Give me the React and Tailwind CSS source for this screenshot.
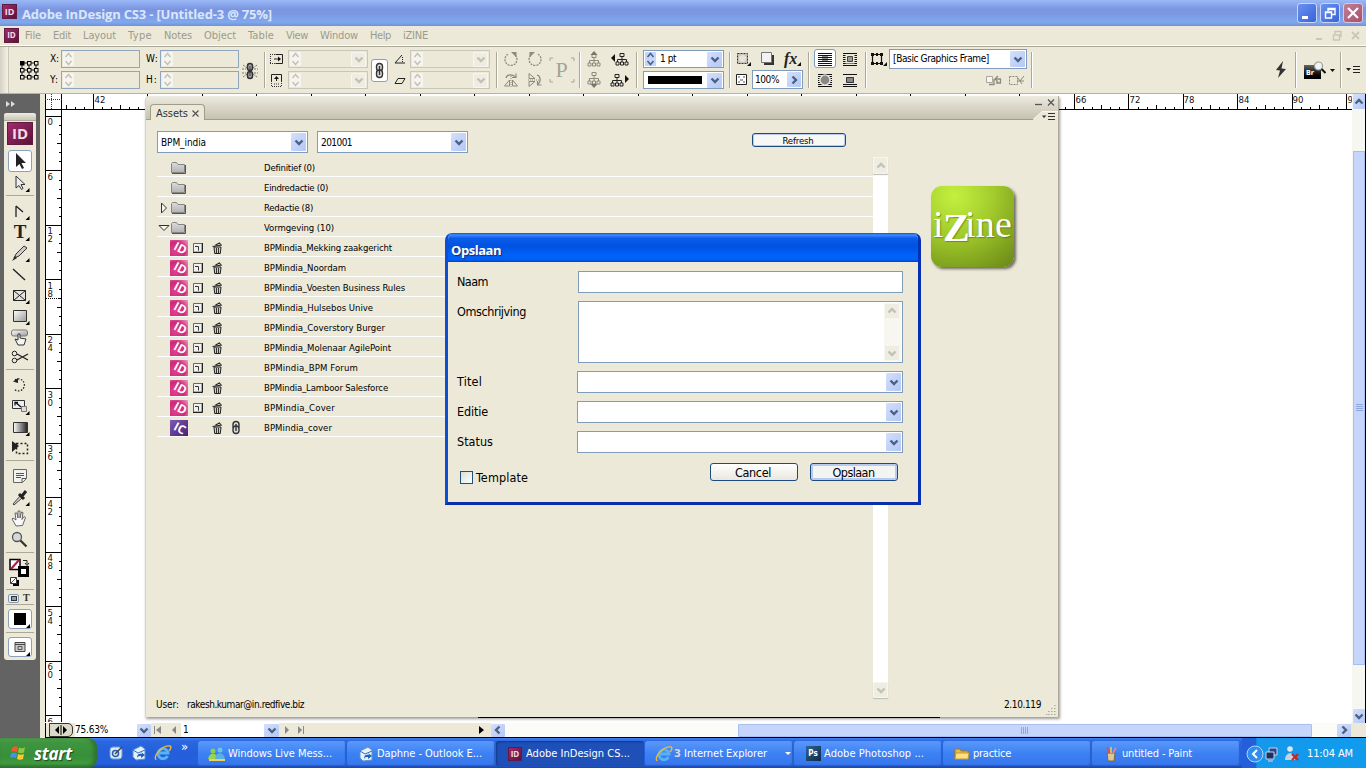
import React, { useLayoutEffect, useRef } from "react";

/* Single-line text whose tracking is adjusted to fill a given width. */
function Fit({ w, className = "", children }) {
  const ref = useRef(null);
  useLayoutEffect(() => {
    const el = ref.current;
    el.style.letterSpacing = "0px";
    const natural = el.getBoundingClientRect().width;
    el.style.letterSpacing = (w - natural) / el.textContent.length + "px";
  }, [w]);
  return (
    <span ref={ref} className={"inline-block whitespace-pre shrink-0 " + className}>
      {children}
    </span>
  );
}

function Ico({ w = 16, h = 16, className = "", children }) {
  return (
    <svg width={w} height={h} viewBox={`0 0 ${w} ${h}`} className={"block shrink-0 " + className} fill="none">
      {children}
    </svg>
  );
}

const Chevron = ({ color = "#4d6185", d = "M3.5 5.5 7 9l3.5-3.5" }) => (
  <Ico w={14} h={14}>
    <path d={d} stroke={color} strokeWidth="2.4" />
  </Ico>
);
const UP = "M3.5 8.5 7 5l3.5 3.5";
const LEFT = "M8.5 3.5 5 7l3.5 3.5";
const RIGHT = "M5.5 3.5 9 7l-3.5 3.5";

function DropBtn({ off = false, d, className = "" }) {
  return (
    <span
      className={
        "flex items-center justify-center shrink-0 overflow-hidden rounded-[1px] " +
        (off ? "border border-[#f7f6f0] bg-[#efede2] " : "bg-gradient-to-br from-[#d3dffd] to-[#b3c8f5] ") +
        className
      }
    >
      <Chevron color={off ? "#c3c1b4" : "#4d6185"} d={d} />
    </span>
  );
}

function Spin({ off = true }) {
  return (
    <span className={"flex h-[14px] w-[11px] shrink-0 items-center justify-center " + (off ? "bg-[#f5f4ee]" : "bg-[#c6d5fa]")}>
      <Ico w={9} h={14}>
        <path d="M1.500 5 4.500 1.500l3 3.500M1.500 9l3 3.500 3-3.500" stroke={off ? "#c6c4b8" : "#4d6185"} strokeWidth="1.600" />
      </Ico>
    </span>
  );
}

const Field = () => (
  <div className="flex h-[18px] w-[79px] items-center border border-[#8fa6bd] px-px">
    <Spin />
  </div>
);
const FieldDrop = () => (
  <div className="flex h-[18px] w-[80px] items-center justify-between border border-[#c9c7ba] px-px">
    <Spin />
    <DropBtn off className="h-[15px] w-[15px]" />
  </div>
);

const Sep = ({ className = "w-[8px]" }) => (
  <div className={"flex h-full shrink-0 justify-center " + className}>
    <div className="mt-[5px] h-[36px] w-[2px] border-l border-[#aca899] bg-white" />
  </div>
);

const Pair = ({ className = "", children }) => (
  <div className={"flex shrink-0 flex-col gap-[3px] pt-[3px] " + className}>{children}</div>
);
const Row = ({ className = "", children }) => <div className={"flex h-[18px] items-center " + className}>{children}</div>;

const ID = ({ className = "h-[16px] w-[16px] text-[9px]" }) => (
  <span
    className={
      "flex shrink-0 items-center justify-center border border-[#5f1c40] bg-gradient-to-br from-[#a52a6f] to-[#5c1238] font-['Open_Sans',sans-serif] font-bold leading-none text-[#f6dbe8] [font-stretch:normal] " +
      className
    }
  >
    ID
  </span>
);

const Chain = ({ c = "#333", w = 15, h = 17 }) => (
  <Ico w={w} h={h}>
    <rect x={w / 2 - 3} y="1.5" width="6" height="7.5" rx="3" stroke={c} strokeWidth="1.4" fill="#ddd" />
    <rect x={w / 2 - 3} y={h - 9} width="6" height="7.5" rx="3" stroke={c} strokeWidth="1.4" fill="#ddd" />
    <path d={`M${w / 2} 4v${h - 8}`} stroke={c} strokeWidth="1.4" />
  </Ico>
);

const Tree = ({ c = "#222" }) => (
  <>
    <path d="M5 1.500h4v3H5zM7 4.500v3M2.500 10V7.500h9V10M7 7.500V10" stroke={c} />
    <path d="M1 10h3v3H1zM5.500 10h3v3h-3zM10 10h3v3h-3z" stroke={c} />
  </>
);

function RotIcon({ flip }) {
  return (
    <Ico>
      <g transform={flip ? "translate(16 0) scale(-1 1)" : undefined}>
        <path d="M5 3.200A6 6 0 1 0 12 4" stroke="#8c8a7d" strokeWidth="1.300" strokeDasharray="2 1" />
        <path d="M8 1h5.500v5.500z" fill="#8c8a7d" />
      </g>
    </Ico>
  );
}

const FlipIcon = ({ v }) => (
  <Ico>
    <g transform={v ? "rotate(90 8 8)" : undefined}>
      <path d="M1.500 14 6.500 14V8zM14.500 14H9.500V8z" stroke="#8c8a7d" />
      <path d="M8 4v12" stroke="#8c8a7d" strokeDasharray="1 1" />
      <path d="M3 6c1-4 7-4 9-1M13 1.500v4H9" stroke="#8c8a7d" strokeWidth="1.200" />
    </g>
  </Ico>
);

const Wrap = ({ kind }) => (
  <Ico w={16} h={16}>
    <path d="M1 2.500h14M1 4.500h14M1 6.500h14M1 8.500h14M1 10.500h14M1 12.500h14M1 14.500h14" stroke="#111" />
    {kind === 0 && <path d="M5 5h6v6H5z" fill="#222" opacity=".5" />}
    {kind === 1 && <path d="M3.500 3.500h9v9h-9z" fill="#ece9d8" />}
    {kind === 1 && <path d="M5.500 5.500h5v5h-5z" fill="#999" stroke="#444" />}
    {kind === 2 && <circle cx="8" cy="8" r="5.800" fill="#ece9d8" />}
    {kind === 2 && <circle cx="8" cy="8" r="4.400" fill="#888" />}
    {kind === 3 && <path d="M0 4h16v8H0z" fill="#ece9d8" />}
    {kind === 3 && <path d="M4.500 5.500h7v5h-7z" fill="#888" stroke="#333" />}
  </Ico>
);

function ControlBar() {
  return (
    <div className="flex h-[48px] shrink-0 border-b border-t border-b-[#b6b3a3] border-t-[#aca899] bg-[#ece9d8]">
      <div className="h-full w-[9px] shrink-0 border-r border-[#c9c6b5] bg-gradient-to-r from-[#d5d2c3] to-[#f4f2e8]" />
      <div className="w-[41px] shrink-0 pl-[10px] pt-[13px]">
        <Ico w={20} h={20}>
          <path d="M3 3h14v14H3zM3 10h14M10 3v14" stroke="#111" />
          {[1, 8, 15].map((y) =>
            [1, 8, 15].map((x) => (
              <rect key={x + "-" + y} x={x + 0.5} y={y + 0.5} width="3.5" height="3.5" fill={x + y === 2 ? "#000" : "#ece9d8"} stroke="#000" />
            ))
          )}
        </Ico>
      </div>
      <Pair className="w-[11px] text-[10px]">
        <Row><Fit w={9}>X:</Fit></Row>
        <Row><Fit w={9}>Y:</Fit></Row>
      </Pair>
      <Pair className="w-[85px]"><Field /><Field /></Pair>
      <Pair className="w-[14px] text-[10px]">
        <Row><Fit w={12}>W:</Fit></Row>
        <Row><Fit w={12}>H:</Fit></Row>
      </Pair>
      <Pair className="w-[82px]"><Field /><Field /></Pair>
      <div className="w-[19px] shrink-0 pt-[15px]">
        <Ico w={16} h={18}>
          <path d="M1 3l4 3M1 15l4-3M15 3l-4 3M15 15l-4-3M0 7h4M0 11h4M12 7h4M12 11h4" stroke="#777" strokeDasharray="2 1" />
          <rect x="5.500" y="1.500" width="5" height="7" rx="2.500" stroke="#333" strokeWidth="1.500" fill="#aaa" />
          <rect x="5.500" y="9.500" width="5" height="7" rx="2.500" stroke="#333" strokeWidth="1.500" fill="#aaa" />
          <path d="M8 4v10" stroke="#333" />
        </Ico>
      </div>
      <Sep />
      <Pair className="w-[19px]">
        <Row>
          <Ico>
            <path d="M1 3.500h6M1 12.500h6M1.500 3v9" stroke="#333" strokeDasharray="1 1" />
            <path d="M6.500 3.500h7v9h-7M5 8h5" stroke="#222" />
            <path d="M9 5.500 12 8l-3 2.500z" fill="#111" />
          </Ico>
        </Row>
        <Row>
          <Ico>
            <path d="M2.500 9v5M12.500 9v5M3 14.500h10M5 12h6" stroke="#333" strokeDasharray="1 1" />
            <path d="M2.500 9V2.500h10V9M7.500 9V6" stroke="#222" />
            <path d="M5 7l2.500-3L10 7z" fill="#111" />
          </Ico>
        </Row>
      </Pair>
      <Pair className="w-[83px]"><FieldDrop /><FieldDrop /></Pair>
      <div className="w-[22px] shrink-0 pt-[12px]">
        <div className="flex h-[23px] w-[17px] items-center justify-center rounded-[3px] border border-[#8ba0bd] bg-white"><Chain /></div>
      </div>
      <Pair className="w-[17px]">
        <Row><Ico w={14} h={14}><path d="M9 3 2 11h10" stroke="#222" /><path d="M9.500 5v5" stroke="#222" strokeDasharray="1 1" /></Ico></Row>
        <Row><Ico w={14} h={14}><path d="M5 5.500h7l-3 5H2z" stroke="#222" /></Ico></Row>
      </Pair>
      <Pair className="w-[81px]"><FieldDrop /><FieldDrop /></Pair>
      <Sep className="w-[11px]" />
      <Pair className="w-[25px] pl-px"><Row><RotIcon /></Row><Row><FlipIcon /></Row></Pair>
      <Pair className="w-[21px]"><Row><RotIcon flip /></Row><Row><FlipIcon v /></Row></Pair>
      <div className="flex h-full w-[27px] shrink-0 items-center justify-center">
        <div className="relative flex h-[26px] w-[26px] items-center justify-center">
          <span className="font-['Liberation_Serif',serif] text-[22px] leading-none text-[#a5a396]">P</span>
          <Ico w={26} h={26} className="absolute left-0 top-0"><path d="M1 4V1h3M22 1h3v3M25 22v3h-3M4 25H1v-3" stroke="#a5a396" /></Ico>
        </div>
      </div>
      <Sep className="w-[10px]" />
      <Pair className="w-[25px] pl-[2px]">
        <Row><Ico w={14} h={18}><g transform="translate(0 3)"><Tree c="#8c8a7d" /></g><path d="M3.500 5 7 1l3.500 4z" fill="#77756a" /></Ico></Row>
        <Row><Ico w={14} h={18}><Tree c="#8c8a7d" /><path d="M3.500 13 7 17l3.500-4z" fill="#77756a" /></Ico></Row>
      </Pair>
      <Pair className="w-[22px]">
        <Row><Ico w={20} h={16}><path d="M5 3v8L1 7z" fill="#111" /><g transform="translate(5 1)"><Tree /></g></Ico></Row>
        <Row><Ico w={20} h={16}><path d="M15 3v8l4-4z" fill="#111" /><g transform="translate(0 1)"><Tree /></g></Ico></Row>
      </Pair>
      <Sep className="w-[10px]" />
      <Pair className="w-[82px] pl-px">
        <div className="flex h-[18px] w-[81px] items-center border border-[#7f9db9] bg-white px-px text-[10px]">
          <Spin off={false} />
          <Fit w={16} className="ml-[4px]">1 pt</Fit>
          <DropBtn className="ml-auto h-[15px] w-[15px]" />
        </div>
        <div className="flex h-[18px] w-[81px] items-center border border-[#7f9db9] bg-white px-px">
          <span className="ml-[3px] h-[8px] w-[54px] bg-black" />
          <DropBtn className="ml-auto h-[15px] w-[15px]" />
        </div>
      </Pair>
      <Sep className="w-[11px]" />
      <div className="flex w-[68px] shrink-0 flex-col gap-[2px] pt-[3px]">
        <div className="flex h-[18px] items-center">
          <Ico w={18} h={16} className="ml-[2px]">
            <path d="M.5 2.500h10v10H.5z" fill="#c9c7bd" stroke="#333" strokeDasharray="2 1" /><circle cx="5.500" cy="7.500" r="3.500" fill="#e5e3da" /><path d="M14 11v4h-4z" fill="#111" />
          </Ico>
          <Ico w={16} h={16} className="ml-[5px]"><path d="M4 4h10v10H4z" fill="#333" /><path d="M1.500 1.500h10v10h-10z" fill="#f2f2f2" stroke="#777" /></Ico>
          <span className="ml-[8px] font-['Liberation_Serif',serif] text-[16px] font-bold italic leading-none text-[#222]">fx</span>
          <Ico w={5} h={16}><path d="M4 11v4H0z" fill="#111" /></Ico>
        </div>
        <div className="flex h-[19px] items-center">
          <Ico w={12} h={14} className="ml-px"><path d="M.5 1.500h10v10H.5z" fill="#fff" stroke="#222" /><path d="M2 3h2v2H2zM7 3h2v2H7zM4 6h3v2H4zM2 8h2v2H2zM7 8h2v2H7z" fill="#aaa" /></Ico>
          <div className="ml-[4px] flex h-[19px] w-[51px] items-center justify-between border border-[#7f9db9] bg-white pl-[2px] pr-px text-[10px]">
            <Fit w={24}>100%</Fit>
            <DropBtn d={RIGHT} className="h-[15px] w-[14px]" />
          </div>
        </div>
      </div>
      <Sep className="w-[11px]" />
      <Pair className="w-[29px]">
        <div className="-mt-px flex h-[19px] w-[22px] items-center justify-center rounded-[3px] border border-[#7f9db9] bg-white"><Wrap kind={0} /></div>
        <Row className="pl-[3px]"><Wrap kind={2} /></Row>
      </Pair>
      <Pair className="w-[18px]"><Row className="-ml-px"><Wrap kind={1} /></Row><Row className="-ml-px"><Wrap kind={3} /></Row></Pair>
      <Sep className="w-[9px]" />
      <div className="w-[19px] shrink-0 pt-[3px]">
        <Ico w={17} h={18}><path d="M2.500 4.500h9v9h-9z" stroke="#111" strokeWidth="1.200" /><path d="M1 3h3v3H1zM10 3h3v3h-3zM1 12h3v3H1zM10 12h3v3h-3zM6 3h2v3H6zM6 12h2v3H6z" fill="#111" /><path d="M17 12v4h-4z" fill="#111" /></Ico>
      </div>
      <div className="w-[138px] shrink-0 pt-[2px]">
        <div className="flex h-[20px] items-center justify-between border border-[#7f9db9] bg-white pl-[3px] pr-px text-[10px]">
          <Fit w={96}>[Basic Graphics Frame]</Fit>
          <DropBtn className="h-[16px] w-[15px]" />
        </div>
        <div className="mt-[5px] flex justify-end gap-[6px] pr-[2px]">
          <Ico w={17} h={14}><path d="M1.500 2.500h6v6h-6z" fill="#f5f4ee" stroke="#aaa89c" /><path d="M4 10.500h5V5M11 5h4.500v4H11M13 2l-3 3 3 3" stroke="#8c8a7d" strokeWidth="1.300" /></Ico>
          <Ico w={17} h={14}><path d="M1.500 2.500h8v8h-8z" stroke="#8c8a7d" strokeDasharray="2 1" /><path d="m16 2-4 5M10 4l4 6M9 7h7" stroke="#8c8a7d" /></Ico>
        </div>
      </div>
      <Sep className="w-[9px]" />
      <div className="grow" />
      <div className="w-[18px] shrink-0 pt-[14px]"><Ico w={12} h={18}><path d="M8 0 1 9l4 .5L3 17l8-9-4.500-.5z" fill="#333" /></Ico></div>
      <Sep className="w-[6px]" />
      <div className="w-[39px] shrink-0 pl-[5px] pt-[14px]">
        <div className="flex items-center">
          <div className="relative h-[19px] w-[24px]">
            <span className="mt-[4px] flex h-[14px] w-[17px] items-center bg-gradient-to-b from-[#666] to-black pl-[2px] pt-[3px] text-[7px] font-bold leading-none text-white">Br</span>
            <Ico w={24} h={19} className="absolute left-0 top-0"><circle cx="14.500" cy="5" r="4" fill="#f3f3f3" stroke="#999" strokeWidth="1.200" /><path d="m17.500 8 4 4" stroke="#111" strokeWidth="2" /></Ico>
          </div>
          <Ico w={6} h={6} className="ml-[2px]"><path d="M0 1h5L2.500 4z" fill="#111" /></Ico>
        </div>
      </div>
      <Sep className="w-[6px]" />
      <div className="w-[22px] shrink-0 pl-[2px] pt-[16px]"><Ico w={16} h={12}><path d="M0 5h5L2.500 8z" fill="#222" /><path d="M7 3.500h7M7 6.500h7M7 9.500h7" stroke="#222" /></Ico></div>
    </div>
  );
}

const toolIcons = [
  { y: "h-[22px]", sel: true, el: <path d="M7 2v14l3.500-3 2.500 5 2-1-2.500-5H17z" fill="#222" /> },
  { y: "h-[21px]", more: true, el: <path d="M7 3v12l3-2.500 2.500 4 1.500-1-2-4h4z" fill="#eee" stroke="#333" /> },
  "line",
  { y: "h-[21px]", more: true, el: <path d="M7 5v11M7 5l7 6" stroke="#222" strokeWidth="1.300" /> },
  { y: "h-[21px]", more: true, letter: "T" },
  { y: "h-[21px]", more: true, el: <><path d="m5 15 2-4 8-8 3 2-8 8z" fill="#ccc" stroke="#333" /><path d="m3 18 3-5 2 2z" fill="#222" /></> },
  { y: "h-[21px]", el: <path d="m4 5 12 11" stroke="#222" strokeWidth="1.400" /> },
  { y: "h-[21px]", more: true, el: <path d="M4.500 5.500h12v10h-12zM4.500 5.500l12 10M16.500 5.500l-12 10" stroke="#222" fill="#e4e3dc" /> },
  { y: "h-[21px]", more: true, el: <path d="M4.500 4.500h13v11h-13z" stroke="#333" fill="url(#silver)" /> },
  { y: "h-[21px]", el: <><rect x="2.500" y="3" width="16" height="6" rx="2" fill="url(#silver)" stroke="#777" /><path d="M9 7v6l-3-1 3 6h6l2-6-6-1V7z" fill="#f4f4f4" stroke="#333" /></> },
  { y: "h-[20px]", el: <><path d="m8 7 11 6M8 13l11-6" stroke="#222" strokeWidth="1.300" /><circle cx="5.500" cy="6.500" r="2.300" stroke="#222" /><circle cx="5.500" cy="13.500" r="2.300" stroke="#222" /></> },
  "line",
  { y: "h-[21px]", el: <><path d="M6 5a6 6 0 1 1-1 9" stroke="#222" strokeWidth="1.300" strokeDasharray="1.500 1.500" /><path d="M4 6.500 9 3v5z" fill="#222" /></> },
  { y: "h-[21px]", more: true, el: <><path d="M3.500 4.500h12v8h-12z" fill="#eee" stroke="#333" /><path d="M12.500 10.500h5v5h-5z" stroke="#777" fill="#ddd" /><path d="m6 6 6 5M6 9.500V6.500h3" stroke="#111" strokeWidth="1.300" /></> },
  { y: "h-[22px]", more: true, el: <path d="M4.500 5.500h14v10h-14z" stroke="#333" fill="url(#fade)" /> },
  { y: "h-[20px]", el: <><path d="M7.500 5.500h11v10h-11z" stroke="#222" strokeWidth="1.500" strokeDasharray="2 2" /><path d="M3 3v11l7-6z" fill="#222" /></> },
  "line",
  { y: "h-[21px]", el: <><path d="M4.500 3.500h13v9l-4 4h-9z" fill="#f2f2ee" stroke="#666" /><path d="M7 7.500h8M7 9.500h8M7 11.500h5M17 12.500h-4v4" stroke="#555" /></> },
  { y: "h-[21px]", more: true, el: <><path d="m4 17 7-8 2 2-8 7z" fill="#ccc" stroke="#444" /><path d="m10 7 5 5M13 9l4-5" stroke="#222" strokeWidth="3" /></> },
  { y: "h-[21px]", el: <path d="M7 18 3 11l1-1 3 2-1-7 2 0 1 5V3h2v7l1.500-6 1.500.5-1 7 2-3 1.500 1-3 8z" fill="#f8f8f8" stroke="#666" /> },
  { y: "h-[22px]", el: <><circle cx="8" cy="8" r="4.500" fill="#d4d8da" stroke="#555" strokeWidth="1.300" /><path d="m11.500 11.500 6 6" stroke="#333" strokeWidth="2.200" /></> },
];

function Tools() {
  return (
    <div className="flex w-[40px] shrink-0 flex-col bg-[#636363] pl-[4px] pt-[4px]">
      <Ico w={12} h={10} className="ml-[2px] mt-[1px]"><path d="M0 2v6l4-3zM5 2v6l4-3z" fill="#ddd" /></Ico>
      <div className="mt-[4px] flex h-[547px] w-[32px] flex-col items-center rounded-[3px] bg-[#ece9d8]">
        <div className="h-[8px] w-full shrink-0 rounded-t-[3px] border-b border-[#b0ad9e] bg-gradient-to-b from-[#efede2] to-[#c9c6b5]" />
        <ID className="mb-[5px] mt-px h-[23px] w-[26px] text-[15px]" />
        {toolIcons.map((t, i) =>
          typeof t === "string" ? (
            <div key={i} className="mb-[4px] mt-[1px] h-[2px] w-[28px] shrink-0 border-b border-[#aca899]" />
          ) : (
            <div key={i} className={"flex w-[24px] shrink-0 items-center justify-center " + t.y + (t.sel ? " rounded-[3px] border border-[#8ba0bd] bg-white" : "")}>
              <div className="relative flex h-[20px] w-[20px] items-center justify-center">
                {t.letter && <span className="font-['Liberation_Serif',serif] text-[19px] font-bold leading-none text-[#222]">T</span>}
                <Ico w={22} h={20} className="absolute -left-px top-0">
                  <defs>
                    <linearGradient id="silver" x1="0" y1="0" x2="1" y2="1"><stop stopColor="#fff" /><stop offset="1" stopColor="#999" /></linearGradient>
                    <linearGradient id="fade"><stop stopColor="#fff" /><stop offset="1" stopColor="#222" /></linearGradient>
                  </defs>
                  {t.el}
                  {t.more && <path d="M20.500 15v4h-4z" fill="#000" />}
                </Ico>
              </div>
            </div>
          )
        )}
        <div className="mt-[2px] h-px w-[28px] shrink-0 bg-[#aca899]" />
        <Ico w={24} h={32} className="mt-[4px]">
          <path d="M2 2.500h10v10H2z" fill="#fff" stroke="#000" strokeWidth="1.500" /><path d="m3 12 8-9" stroke="#b0184a" strokeWidth="2" />
          <path d="M11.500 10.500h8v8h-8z" fill="#fff" stroke="#000" strokeWidth="3" />
          <path d="M15 3.500h4V7M17 6l2 2.500L21 6" stroke="#222" />
          <path d="M5 23h6v6H5z" fill="#000" /><path d="M2.500 20.500h6v6h-6z" fill="#fff" stroke="#333" /><path d="m3 26 5-5" stroke="#b0184a" />
        </Ico>
        <div className="h-px w-[28px] shrink-0 bg-[#aca899]" />
        <div className="mt-[2px] flex h-[12px] w-[24px] shrink-0 items-center gap-[4px]">
          <span className="flex h-[9px] w-[11px] items-center justify-center rounded-[2px] border border-[#7f9db9] bg-[#e6ecf7]"><span className="h-[5px] w-[6px] border border-[#333] bg-[#999]" /></span>
          <span className="font-['Liberation_Serif',serif] text-[10px] font-bold leading-none text-[#333]">T</span>
        </div>
        <div className="h-px w-[28px] shrink-0 bg-[#aca899]" />
        <div className="mt-[4px] flex h-[20px] w-[24px] shrink-0 items-center justify-center rounded-[3px] border border-[#8ba0bd] bg-white">
          <Ico w={20} h={18}><path d="M4 3h12v12H4z" fill="#000" /><path d="M20 14v4h-4z" fill="#000" /></Ico>
        </div>
        <div className="mt-[3px] h-px w-[28px] shrink-0 bg-[#aca899]" />
        <div className="mt-[4px] flex h-[20px] w-[24px] shrink-0 items-center justify-center rounded-[3px] border border-[#8ba0bd] bg-white">
          <Ico w={20} h={18}><path d="M5 4.500h10v9H5zM5 6.500h10" stroke="#444" fill="#ccc" /><path d="M8 8.500h4v3H8z" stroke="#555" /><path d="M20 14v4h-4z" fill="#000" /></Ico>
        </div>
      </div>
    </div>
  );
}

const hTicks = Array.from({ length: 150 }, (_, i) => ({ x: Math.round(31 + (i - 6) * 9.083), k: i % 6 })).filter((t) => t.x > 0);
const hLabels = [["42", 31], ["66", 1012], ["72", 1066], ["78", 1120], ["84", 1175], ["90", 1229], ["9", 1284]];
const vTicks = Array.from({ length: 68 }, (_, i) => ({ y: Math.round(6 + i * 9.083), k: i % 6 }));
const vLabels = ["0", "6", "12", "18", "24", "30", "36", "42", "48", "54", "60", "6"];

function HRuler() {
  return (
    <Ico w={1290} h={16} className="bg-white">
      {hTicks.map((t, i) => (
        <rect key={i} x={t.x} y={t.k === 0 ? 0 : t.k === 3 ? 11 : 13} width="1" height={t.k === 0 ? 15 : t.k === 3 ? 4 : 2} fill="#000" />
      ))}
      <rect y="15" width="1290" height="1" fill="#000" />
      {hLabels.map(([s, x]) => (
        <text key={s} x={x + 1.5} y="9" fontSize="9.500" fill="#111">{s}</text>
      ))}
    </Ico>
  );
}

function VRuler() {
  return (
    <Ico w={17} h={612} className="bg-white">
      <rect width="1" height="612" fill="#000" />
      <rect x="16" width="1" height="612" fill="#000" />
      {vTicks.map((t, i) => (
        <rect key={i} x={t.k === 0 ? 0 : t.k === 3 ? 12 : 14} y={t.y} width={t.k === 0 ? 16 : t.k === 3 ? 4 : 2} height="1" fill="#000" />
      ))}
      <path d="M1 188.500h15" stroke="#000" strokeDasharray="1 1" />
      {vLabels.map((s, i) =>
        s.split("").map((c, j) => (
          <text key={i + "-" + j} x="2.500" y={15 + i * 54.5 + j * 8} fontSize="9.500" fill="#111">{c}</text>
        ))
      )}
    </Ico>
  );
}

const Folder = () => (
  <Ico w={17} h={14}>
    <path d="M1.500 11.500v-9l1-1h4l1.500 2h6.500v8z" fill="url(#fold)" stroke="#858585" />
    <path d="M2 12.500h13.500V4" stroke="#555" />
    <defs><linearGradient id="fold" x1="0" y1="0" x2="0" y2="1"><stop stopColor="#dcdcdc" /><stop offset="1" stopColor="#b2b2b2" /></linearGradient></defs>
  </Ico>
);

const Badge = ({ ic }) => (
  <span className={"flex h-[16px] w-[18px] items-center justify-center overflow-hidden " + (ic ? "bg-gradient-to-br from-[#8157b4] to-[#482273]" : "bg-[radial-gradient(circle_at_30%_70%,#e0408c_0%,#cc2a78_55%,#f0a0c8_100%)]")}>
    <span className="rotate-[28deg] pl-[2px] font-['Open_Sans',sans-serif] text-[12px] font-bold leading-none text-white [font-stretch:normal]">{ic ? "IC" : "ID"}</span>
  </span>
);
const PageIcon = () => (
  <Ico w={10} h={11}><path d="M.5 1.500h8.500v8.500H.5z" fill="#f0f0ee" stroke="#666" /><path d="M2 4.500h3.500v4" stroke="#333" /><path d="M9.500 1v9.500H0" stroke="#222" /></Ico>
);
const Trash = () => (
  <Ico w={11} h={12}><path d="M2 5h7l-.7 6.500H2.700z" fill="#ccc" stroke="#222" /><path d="M4.500 6v5M6.500 6v5" stroke="#222" strokeWidth=".9" /><path d="m.5 4.500 9.500-1.500M3.500 3l4-2 1 1.500" stroke="#222" strokeWidth="1.200" /></Ico>
);

const rows = [
  ["Definitief (0)", 51, "f"],
  ["Eindredactie (0)", 64, "f"],
  ["Redactie (8)", 49, "c"],
  ["Vormgeving (10)", 70, "o"],
  ["BPMindia_Mekking zaakgericht", 128, "d"],
  ["BPMindia_Noordam", 82, "d"],
  ["BPMindia_Voesten Business Rules", 141, "d"],
  ["BPMindia_Hulsebos Unive", 109, "d"],
  ["BPMindia_Coverstory Burger", 121, "d"],
  ["BPMindia_Molenaar AgilePoint", 127, "d"],
  ["BPMindia_BPM Forum", 94, "d"],
  ["BPMindia_Lamboor Salesforce", 124, "d"],
  ["BPMindia_Cover", 71, "d"],
  ["BPMindia_cover", 68, "i"],
];

function AssetRow({ label, w, kind }) {
  const tree = kind === "f" || kind === "c" || kind === "o";
  return (
    <div className="flex h-[20px] items-center border-b border-white pt-[2px]">
      <div className="flex w-[13px] shrink-0 items-center pl-px">
        {kind === "c" && <Ico w={12} h={12}><path d="M3.500 1v10l5-5z" stroke="#333" fill="#f5f4ee" /></Ico>}
        {kind === "o" && <Ico w={12} h={12}><path d="M1 3.500h10l-5 5z" stroke="#333" fill="#f5f4ee" /></Ico>}
      </div>
      <div className="w-[23px] shrink-0">{tree ? <Folder /> : <Badge ic={kind === "i"} />}</div>
      <div className="w-[19px] shrink-0">{kind === "d" && <PageIcon />}</div>
      <div className="w-[18px] shrink-0">{!tree && <Trash />}</div>
      <div className="w-[34px] shrink-0">{kind === "i" && <Chain w={12} h={15} />}</div>
      <Fit w={w}>{label}</Fit>
    </div>
  );
}

const Combo = ({ text, w, className = "" }) => (
  <div className={"flex items-center justify-between border border-[#7f9db9] bg-white pl-[3px] pr-px " + className}>
    {text ? <Fit w={w} className="pt-px">{text}</Fit> : <span />}
    <DropBtn className="h-[18px] w-[15px]" />
  </div>
);

function AssetsPanel() {
  return (
    <div className="absolute left-[145px] top-[96px] flex h-[621px] w-[914px] flex-col rounded-tl-[4px] border-l border-r border-[#d8d5c6] border-r-[#aca899] bg-[#ece9d8] text-[9.5px] shadow-[1px_2px_3px_rgba(0,0,0,0.4)]">
      <div className="flex h-[24px] shrink-0 items-end justify-between rounded-tl-[4px] border-b border-[#9f9c8c] bg-gradient-to-b from-[#edebe0] via-[#d9d6c8] to-[#c6c3b2]">
        <div className="-mb-px ml-[4px] flex h-[16px] w-[55px] items-center gap-[3px] rounded-t-[4px] border border-b-0 border-[#9f9c8c] bg-[#ece9d8] pl-[5px] pt-[2px] text-[11px] text-[#333]">
          <Fit w={32}>Assets</Fit>
          <Ico w={9} h={9}><path d="m1.500 1.500 6 6M7.500 1.500l-6 6" stroke="#555" strokeWidth="1.200" /></Ico>
        </div>
        <Ico w={27} h={24} className="-mb-px">
          <path d="M2 24 11 15.500H27V24z" fill="#ece9d8" /><path d="M2 23.500 11 15.500H27" stroke="#f8f7f0" />
          <path d="M4 8.500h7" stroke="#555" strokeWidth="1.300" /><path d="m17 3.500 6 6M23 3.500l-6 6" stroke="#555" strokeWidth="1.200" />
          <path d="M11 19.500h4.500L13 22z" fill="#333" /><path d="M17 17.500h7M17 20.500h7M17 23.500h7" stroke="#333" />
        </Ico>
      </div>
      <div className="mt-[11px] flex h-[26px] shrink-0 items-start pl-[11px] text-[10px]">
        <Combo text="BPM_india" w={45} className="h-[22px] w-[151px]" />
        <Combo text="201001" w={31} className="ml-[9px] h-[22px] w-[151px]" />
        <button className="ml-[284px] mt-[2px] flex h-[14px] w-[94px] items-center justify-center rounded-[3px] border border-[#1d4a80] bg-[#f7f7f4] pr-[2px] pt-[2px] shadow-[inset_0_0_0_1px_#b7cbf0]"><Fit w={31} className="text-[9.5px]">Refresh</Fit></button>
      </div>
      <div className="flex h-[541px] shrink-0 pl-[11px]">
        <div className="w-[717px] shrink-0">
          {rows.map(([l, w, k]) => <AssetRow key={l} label={l} w={w} kind={k} />)}
        </div>
        <div className="-ml-px flex w-[15px] shrink-0 flex-col justify-between bg-white">
          <DropBtn off d={UP} className="h-[17px] w-[15px] shadow-[0_1px_1px_#bbb]" />
          <DropBtn off className="h-[16px] w-[15px] shadow-[0_1px_1px_#bbb]" />
        </div>
        <div className="ml-[43px] mt-[29px] flex h-[81px] w-[83px] items-center justify-center rounded-[11px] bg-[radial-gradient(circle_at_28%_12%,#c4f040_0%,#a3cc2c_42%,#6d8c17_95%)] font-['Liberation_Serif',serif] text-white shadow-[2px_2px_3px_rgba(0,0,0,0.55)]">
          <span className="-mt-[5px] flex items-baseline leading-none [text-shadow:1px_1px_1px_rgba(60,90,10,0.5)]">
            <Fit w={10} className="text-[38px]">i</Fit>
            <Fit w={22} className="relative top-[4px] text-[40px] font-bold">Z</Fit>
            <Fit w={47} className="text-[38px]">ine</Fit>
          </span>
        </div>
      </div>
      <div className="flex items-center pl-[10px] pr-[17px] text-[10px]">
        <Fit w={23}>User:</Fit>
        <Fit w={117} className="ml-[8px]">rakesh.kumar@in.redfive.biz</Fit>
        <span className="grow" />
        <Fit w={37}>2.10.119</Fit>
      </div>
      <Ico w={10} h={10} className="absolute bottom-[2px] right-[2px]">
        {[[8, 0], [5, 3], [8, 3], [2, 6], [5, 6], [8, 6], [0, 9], [2, 9], [5, 9], [8, 9]].map(([x, y], i) => <rect key={i} x={x} y={y} width="1.500" height="1" fill="#aca899" />)}
      </Ico>
      <div className="absolute bottom-[-1px] left-[332px] h-px w-[462px] bg-black" />
    </div>
  );
}

const Label = ({ w, children, className = "" }) => (
  <div className={"w-[120px] shrink-0 " + className}><Fit w={w}>{children}</Fit></div>
);

function SaveDialog() {
  return (
    <div className="absolute left-[445px] top-[233px] flex h-[272px] w-[476px] flex-col overflow-hidden rounded-t-[7px] border-b-[3px] border-l-[3px] border-r-[3px] border-b-[#0a2fa8] border-l-[#0c4fd6] border-r-[#0630b4] bg-[#ece9d8]">
      <div className="-mx-[3px] flex h-[29px] shrink-0 items-center bg-[linear-gradient(to_bottom,#1a50c8_0%,#3d8cff_7%,#0b5cea_18%,#0052e0_45%,#0062fb_78%,#0060f5_92%,#0040c8_100%)] pl-[6px] pt-[4px] font-['Open_Sans',sans-serif] text-[13px] font-bold text-white [font-stretch:normal] [text-shadow:1px_1px_1px_#0a2a80]">
        <Fit w={50}>Opslaan</Fit>
      </div>
      <div className="flex flex-col pl-[9px] pr-[15px] pt-[9px] text-[12.5px]">
        <div className="flex h-[22px] items-center"><Label w={31}>Naam</Label><div className="ml-px h-[22px] grow border border-[#7f9db9] bg-white" /></div>
        <div className="mt-[8px] flex h-[62px]">
          <Label w={69} className="pt-[4px]">Omschrijving</Label>
          <div className="ml-px flex grow justify-end border border-[#7f9db9] bg-white p-px">
            <div className="flex w-[17px] flex-col justify-between bg-[#f7f6f1]">
              <DropBtn off d={UP} className="h-[16px] w-[16px] border-[#dddbd0]" />
              <DropBtn off className="h-[16px] w-[16px] border-[#dddbd0]" />
            </div>
          </div>
        </div>
        <div className="mt-[8px] flex h-[22px] items-center"><Label w={25}>Titel</Label><Combo className="h-[22px] grow" /></div>
        <div className="mt-[8px] flex h-[22px] items-center"><Label w={31}>Editie</Label><Combo className="h-[22px] grow" /></div>
        <div className="mt-[8px] flex h-[22px] items-center"><Label w={36}>Status</Label><Combo className="h-[22px] grow" /></div>
        <div className="mt-[10px] flex pr-[5px]">
          <span className="ml-[3px] mt-[8px] h-[13px] w-[13px] border border-[#1c5180] bg-gradient-to-br from-[#dcdcd7] to-white" />
          <Fit w={52} className="ml-[3px] mt-[8px]">Template</Fit>
          <span className="grow" />
          <button className="flex h-[18px] w-[88px] items-center justify-center rounded-[3px] border border-[#1d4a80] bg-gradient-to-b from-white to-[#e9e7de] pr-[2px] pt-px"><Fit w={36}>Cancel</Fit></button>
          <button className="ml-[12px] flex h-[18px] w-[88px] items-center justify-center rounded-[3px] border border-[#1d4a80] bg-[#f4f4f2] pr-px pt-px shadow-[inset_0_0_0_2px_#b7cbf0]"><Fit w={42}>Opslaan</Fit></button>
        </div>
      </div>
    </div>
  );
}

function StatusBar() {
  return (
    <div className="flex h-[15px] shrink-0 items-center border-b border-black bg-[#ece9d8] text-[10px]">
      <div className="h-full w-px bg-black" />
      <div className="ml-[3px] flex h-[14px] w-[24px] items-center justify-center rounded-r-[5px] border border-[#333] bg-[#dcd9c8]">
        <Ico w={14} h={10}><path d="M5 1v8L1 5zM9 1v8l4-4z" fill="#000" /><path d="M7 0v10" stroke="#000" /></Ico>
      </div>
      <div className="ml-[2px] flex h-full w-[76px] items-center justify-between bg-white"><Fit w={33}>75.63%</Fit><DropBtn className="h-[13px] w-[14px]" /></div>
      <Ico w={28} h={12} className="ml-[2px]"><path d="M1.500 2v8" stroke="#888" /><path d="M8 2v8L3 6zM23 2v8l-4-4z" fill="#888" /></Ico>
      <div className="flex h-full w-[98px] items-center justify-between bg-white pl-[2px]"><span>1</span><DropBtn className="h-[13px] w-[15px]" /></div>
      <Ico w={26} h={12} className="ml-[4px]"><path d="M2 2v8l4-4zM15 2v8l4-4z" fill="#888" /><path d="M20.500 2v8" stroke="#888" /></Ico>
      <span className="grow" />
      <Ico w={8} h={12} className="mr-[5px]"><path d="M1 2v8l5-4z" fill="#000" /></Ico>
      <div className="flex h-full w-[860px] shrink-0 items-center bg-[#fbfbf8]">
        <DropBtn d={LEFT} className="h-[13px] w-[14px]" />
        <div className="ml-[233px] flex h-[13px] w-[574px] items-center justify-center rounded-[1px] border border-[#a9bff0] bg-[#c6d5fb]">
          <Ico w={8} h={7}><path d="M.5 0v7M2.500 0v7M4.500 0v7M6.500 0v7" stroke="#8fa6dd" /></Ico>
        </div>
        <span className="grow" />
        <DropBtn d={RIGHT} className="h-[13px] w-[14px]" />
      </div>
      <div className="h-full w-[15px] shrink-0" />
    </div>
  );
}

const IE = () => (
  <Ico w={18} h={18}><path d="M13.500 12a5 5 0 1 1 .5-3H5" stroke="#56b4f5" strokeWidth="2.800" /><path d="M2 16C-1 11 9 1 16 2c2 1 0 4-1 5" stroke="#f0b838" strokeWidth="1.400" /></Ico>
);
const Outlook = () => (
  <Ico w={16} h={16}><path d="M2 5 10 1l4 3v10l-9 1-3-3z" fill="#e8f1fb" stroke="#5b93d0" /><path d="m2 5 5 3 7-3" stroke="#2f74bd" /><path d="M6 13c0-4 2-5 5-4l-1-2 4 3-4 3v-2c-2 0-3 0-4 2z" fill="#1d62b8" /></Ico>
);

const tasks = [
  { t: "Windows Live Mess...", w: 104, ic: <Ico w={18} h={16}><circle cx="5" cy="5" r="2.500" fill="#8ccf4c" /><circle cx="12" cy="4" r="2.500" fill="#6bc3ea" /><path d="M0 13c1-7 9-7 10 0z" fill="#9bd34f" /><path d="M7 13c1-8 9-7 10 0z" fill="#59b2dc" /><path d="M1 14h16" stroke="#f0d060" strokeWidth="2" /></Ico> },
  { t: "Daphne - Outlook E...", w: 105, ic: <Outlook /> },
  { t: "Adobe InDesign CS...", w: 104, on: true, ic: <ID className="h-[14px] w-[14px] text-[8px]" /> },
  { t: "Internet Explorer", w: 83, n: "3", ic: <IE />, more: true },
  { t: "Adobe Photoshop ...", w: 100, ic: <span className="flex h-[15px] w-[15px] items-center justify-center bg-gradient-to-br from-[#2e6596] to-[#0c2a4a] text-[8px] font-bold leading-none text-white">Ps</span> },
  { t: "practice", w: 38, ic: <Ico w={16} h={16}><path d="M1 13V3h5l1 2h7v8z" fill="#e9b93c" stroke="#a87b16" /><path d="m1 13 1-6h13l-1 6z" fill="#fbe08a" stroke="#c9982a" /></Ico> },
  { t: "untitled - Paint", w: 70, ic: <Ico w={14} h={16}><path d="M3 7h8l-1 8H4z" fill="#d9c7a0" stroke="#80653a" /><path d="m5 7-2-6" stroke="#e04e3c" strokeWidth="1.600" /><path d="M7 7V1" stroke="#f2c94c" strokeWidth="1.600" /><path d="m9 7 3-5" stroke="#e88" strokeWidth="1.600" /></Ico> },
];

function Taskbar() {
  return (
    <div className="flex h-[30px] shrink-0 bg-[linear-gradient(to_bottom,#3f80ee_0%,#2b67e0_10%,#245edb_50%,#2460de_85%,#1b47ad_100%)] text-[11px] text-white">
      <div className="flex w-[97px] shrink-0 items-center rounded-r-[9px] bg-[linear-gradient(to_bottom,#5cab5a_0%,#3f9540_15%,#378f38_60%,#3f9a3f_85%,#2a702b_100%)] pl-[10px] shadow-[inset_-3px_0_4px_#2d6f2d]">
        <Ico w={19} h={18}>
          <path d="M2 4c2-2 4-2 6-1L7 8C5 7 3 7 1 8z" fill="#f0592a" /><path d="M9 3.500c2 1 4 1 6-.5l-1 5.500c-2 1-4 1-6 0z" fill="#8dc63f" />
          <path d="M1 9.500c2-1 4-1 6 0L6 14c-2-1-4-1-6 0z" fill="#4a8ff0" /><path d="M8 10c2 1 4 1 6 0l-1 5c-2 1-4 1-6 0z" fill="#fbc92d" />
        </Ico>
        <Fit w={38} className="ml-[5px] font-['Open_Sans',sans-serif] text-[17px] font-bold italic leading-none [font-stretch:normal] [text-shadow:1px_1px_1px_#1c4a1c]">start</Fit>
      </div>
      <div className="flex w-[101px] shrink-0 items-center gap-[7px] pl-[11px]">
        <Ico w={16} h={16}><rect x="2" y="2" width="12" height="12" rx="3" fill="#dce9f8" stroke="#6c9ad2" /><circle cx="7.500" cy="8.500" r="3" stroke="#2b5fa8" strokeWidth="1.500" /><path d="m7 9 7-7" stroke="#444" strokeWidth="1.500" /></Ico>
        <Outlook />
        <IE />
        <span className="mb-[13px] ml-[2px] text-[13px] leading-none">»</span>
      </div>
      <div className="flex w-[1044px] shrink-0 items-center gap-px">
        {tasks.map((k) => (
          <div
            key={k.t}
            className={
              "flex h-[25px] w-[148px] shrink-0 items-center rounded-[3px] pl-[10px] pt-px " +
              (k.on ? "bg-[#1e50b8] shadow-[inset_1px_1px_2px_#123a8c]" : "bg-gradient-to-b from-[#5a98fa] via-[#3c81f3] to-[#3676ea] shadow-[inset_-1px_-1px_1px_#2a5fc8]")
            }
          >
            <span className="flex w-[18px] shrink-0 justify-center">{k.ic}</span>
            {k.n && <span className="ml-px w-[7px] text-[11px] font-bold text-[#d9d5ea]">{k.n}</span>}
            <Fit w={k.w} className={k.n ? "ml-[3px]" : "ml-[2px]"}>{k.t}</Fit>
            {k.more && <Ico w={7} h={5} className="ml-auto mr-[1px]"><path d="M0 1h6L3 4z" fill="#fff" /></Ico>}
          </div>
        ))}
      </div>
      <div className="flex grow items-center bg-[linear-gradient(to_right,#245edb_0px,#245edb_13px,#0a5fc0_13px,#1598ec_15px,#119beb_100%)] pl-[4px] pt-px">
        <Ico w={18} h={18}><circle cx="9" cy="9" r="8" fill="#2f8df0" stroke="#a9d6fa" /><path d="M11 5 7 9l4 4" stroke="#fff" strokeWidth="2" /></Ico>
        <Ico w={16} h={16}><path d="M5 2h8v7H5z" fill="#28468c" stroke="#c8d4e8" /><path d="M2 6h8v7H2z" fill="#1a2f66" stroke="#c8d4e8" /><path d="M4 15h5" stroke="#ddd" /></Ico>
        <Ico w={17} h={17} className="ml-[4px]"><circle cx="6" cy="4" r="2.800" fill="#dfe6ee" /><path d="M1 15c0-9 10-9 10 0z" fill="#c3d3e2" /><path d="m8 9 6 6M14 9l-6 6" stroke="#d02020" strokeWidth="2" /></Ico>
        <Fit w={46} className="ml-[6px]">11:04 AM</Fit>
      </div>
    </div>
  );
}

const menus = [["File", 16, 25], ["Edit", 18, 53], ["Layout", 33, 83], ["Type", 24, 128], ["Notes", 28, 164], ["Object", 32, 204], ["Table", 26, 248], ["View", 22, 286], ["Window", 38, 320], ["Help", 21, 370], ["iZINE", 25, 403]];

export default function App() {
  return (
    <div className="relative flex h-[768px] w-[1366px] flex-col overflow-hidden bg-[#ece9d8] font-['DejaVu_Sans_Condensed','DejaVu_Sans',sans-serif] leading-[14px] text-black [font-stretch:condensed]">
      <div className="flex h-[26px] shrink-0 items-center bg-[linear-gradient(to_bottom,#9ab8f5_0%,#8eaaf0_15%,#7b96e0_35%,#7b99e2_55%,#80a9ed_85%,#7290dc_100%)] pl-[2px] pr-[3px] text-[#dbe6fb]">
        <ID className="mb-[4px] h-[15px] w-[15px] text-[9px]" />
        <Fit w={250} className="ml-[5px] mt-px font-['Open_Sans',sans-serif] text-[13px] font-bold [font-stretch:normal]">Adobe InDesign CS3 - [Untitled-3 @ 75%]</Fit>
        <span className="grow" />
        <div className="flex gap-[3px]">
          <span className="rounded-[3px] border border-[#c8d6f8] bg-gradient-to-br from-[#6a92f0] to-[#3a62d8]"><Ico w={18} h={18}><path d="M4 13.500h6" stroke="#fff" strokeWidth="3" /></Ico></span>
          <span className="rounded-[3px] border border-[#c8d6f8] bg-gradient-to-br from-[#6a92f0] to-[#3a62d8]"><Ico w={18} h={18}><path d="M4.500 8h6v6h-6zM7 7V4.500h7v6h-3M4.500 8.500h6M7 5.500h7" stroke="#fff" strokeWidth="1.400" /></Ico></span>
          <span className="rounded-[3px] border border-[#d8c8e0] bg-gradient-to-br from-[#c07f98] to-[#a8506a]"><Ico w={18} h={18}><path d="m4 4 10 10M14 4 4 14" stroke="#fff" strokeWidth="2.200" /></Ico></span>
        </div>
      </div>
      <div className="flex h-[20px] shrink-0 items-center border-b border-white pl-[4px] pr-[4px] text-[11px] text-[#9c9a8c]">
        <ID className="mt-[-1px] h-[15px] w-[15px] text-[8px]" />
        <div className="ml-[6px] flex">
          {menus.map(([m, w, x], i) => (
            <div key={m} className="shrink-0" style={{ width: (menus[i + 1]?.[2] ?? 440) - x }}><Fit w={w}>{m}</Fit></div>
          ))}
        </div>
        <span className="grow" />
        <Ico w={48} h={12}><path d="M2 9h6" stroke="#c9c7ba" strokeWidth="2" /><path d="M19.500 5h6v5h-6zM21 4V1.500h6v5h-2" stroke="#c9c7ba" strokeWidth="1.400" /><path d="m38 2 7 7M45 2l-7 7" stroke="#c9c7ba" strokeWidth="1.800" /></Ico>
      </div>
      <ControlBar />
      <div className="flex h-[644px] shrink-0">
        <Tools />
        <div className="w-[5px] shrink-0 bg-[#ece9d8]" />
        <div className="flex grow flex-col">
          <div className="flex h-[629px] shrink-0 bg-white">
            <div className="flex w-[1307px] shrink-0 flex-col">
              <div className="flex h-[16px] shrink-0">
                <Ico w={17} h={16} className="bg-white"><path d="M.5 0v16M16.500 0v16M0 15.500h17" stroke="#000" /><path d="M6.500 0v16M0 5.500h17" stroke="#333" strokeDasharray="1 1" /></Ico>
                <HRuler />
              </div>
              <VRuler />
            </div>
            <div className="flex w-[13px] shrink-0 flex-col bg-[#f7f7f2] pl-px">
              <DropBtn d={UP} className="h-[15px] w-[12px]" />
              <div className="mt-[42px] flex h-[514px] w-[12px] shrink-0 items-center justify-center border border-[#a9bff0] bg-[#c6d5fb]">
                <Ico w={7} h={8}><path d="M0 .5h7M0 2.500h7M0 4.500h7M0 6.500h7" stroke="#8fa6dd" /></Ico>
              </div>
              <span className="grow" />
              <DropBtn className="h-[14px] w-[12px]" />
            </div>
            <div className="w-px shrink-0 bg-black" />
          </div>
          <StatusBar />
        </div>
      </div>
      <Taskbar />
      <AssetsPanel />
      <SaveDialog />
    </div>
  );
}
